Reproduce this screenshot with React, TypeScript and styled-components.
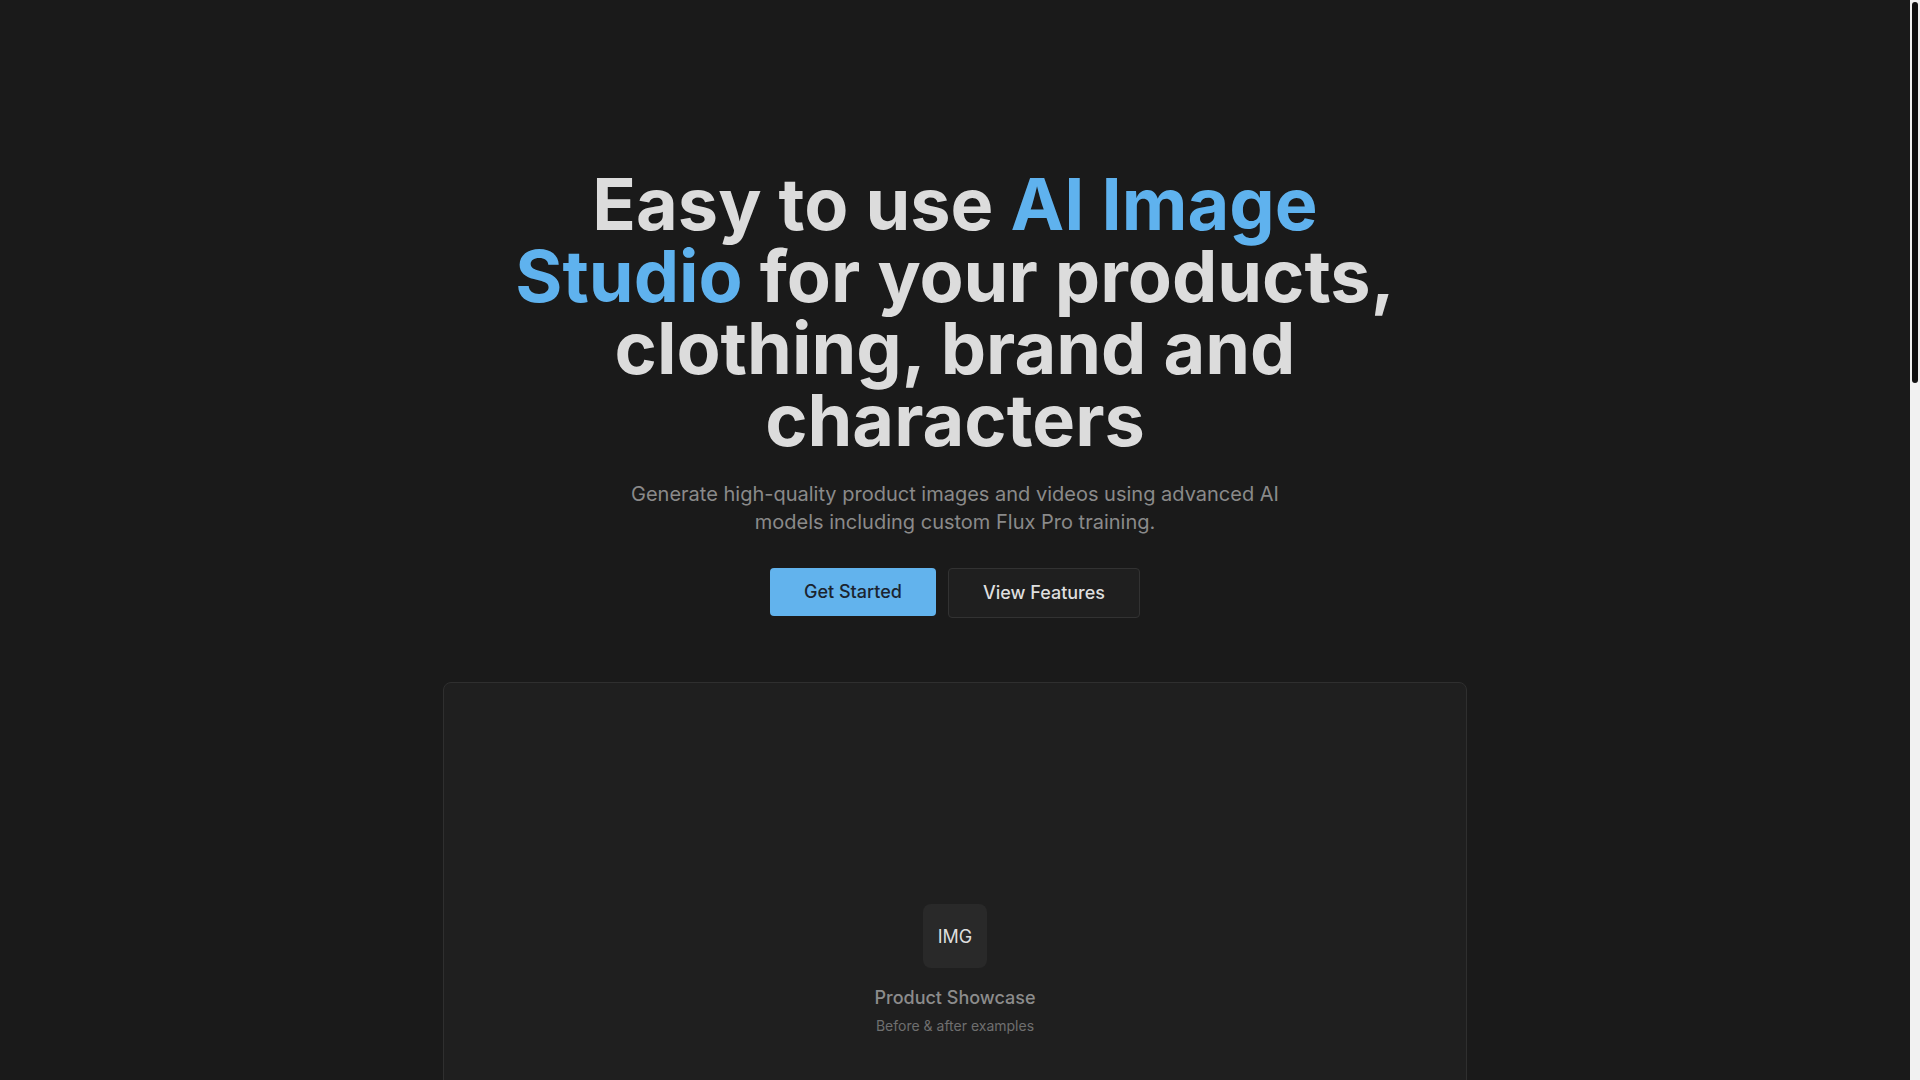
import * as React from 'react';
import styled, { createGlobalStyle } from 'styled-components';

const GlobalStyle = createGlobalStyle`
	html, body {
		height: 100%;
		overflow: hidden;
	}

	body {
		margin: 0;
		background: #1a1a1a;
		color: #dcdcdc;
		font-family: Inter, 'Noto Sans', sans-serif;
		-webkit-font-smoothing: antialiased;
	}

	#root {
		height: 100%;
	}

	* {
		box-sizing: border-box;
	}
`;

const Shell = styled.div`
	height: 100vh;
	display: flex;
	background: #1a1a1a;
`;

const Page = styled.main`
	flex: 1;
	height: 100vh;
	overflow-y: scroll;
	scrollbar-width: none;

	&::-webkit-scrollbar {
		display: none;
	}
`;

const ScrollRail = styled.div`
	position: relative;
	flex: 0 0 10px;
	height: 100vh;
	background: #f1f1f1;
`;

const ScrollThumb = styled.div`
	position: absolute;
	left: 2px;
	right: 2px;
	border-radius: 3px;
	background: #111111;
`;

const Hero = styled.section`
	padding: 168px 24px 96px;
	display: flex;
	flex-direction: column;
	align-items: center;
	text-align: center;
`;

const Title = styled.h1`
	max-width: 896px;
	margin: 0 0 24px;
	font-size: 72px;
	line-height: 72px;
	font-weight: 700;
	color: #dcdcdc;
`;

const Accent = styled.span`
	color: #5fb2ee;
`;

const Lead = styled.p`
	max-width: 672px;
	margin: 0 0 32px;
	font-size: 20px;
	line-height: 28px;
	color: #8a8a8a;
`;

const Actions = styled.div`
	display: flex;
	align-items: flex-start;
	justify-content: center;
	gap: 12px;
	margin-bottom: 64px;
`;

const Button = styled.a<{ $primary?: boolean }>`
	display: inline-flex;
	align-items: center;
	justify-content: center;
	padding: 10px 34px;
	font-size: 18px;
	line-height: 28px;
	font-weight: 500;
	text-decoration: none;
	border-radius: 4px;
	cursor: pointer;
	background: ${p => (p.$primary ? '#62b3ed' : '#1f1f1f')};
	color: ${p => (p.$primary ? '#1b2430' : '#dedede')};
	border: ${p => (p.$primary ? 'none' : '1px solid #323232')};
`;

const Showcase = styled.div`
	width: 100%;
	max-width: 1024px;
	aspect-ratio: 16 / 9;
	background: #1f1f1f;
	border: 1px solid #2f2f2f;
	border-radius: 8px;
	display: flex;
	flex-direction: column;
	align-items: center;
	justify-content: center;
`;

const Placeholder = styled.div`
	width: 64px;
	height: 64px;
	border-radius: 8px;
	background: #292929;
	display: flex;
	align-items: center;
	justify-content: center;
	font-size: 18px;
	color: #dedede;
	margin-bottom: 16px;
`;

const ShowcaseTitle = styled.div`
	font-size: 18px;
	line-height: 28px;
	font-weight: 500;
	color: #8c8c8c;
`;

const ShowcaseNote = styled.div`
	margin-top: 4px;
	font-size: 14px;
	line-height: 20px;
	color: #6f6f6f;
`;

const Section = styled.section`
	padding: 120px 24px;
	display: flex;
	flex-direction: column;
	align-items: center;
	text-align: center;
`;

const SectionTitle = styled.h2`
	margin: 0 0 16px;
	font-size: 48px;
	line-height: 56px;
	font-weight: 700;
	color: #dcdcdc;
`;

const SectionLead = styled.p`
	max-width: 672px;
	margin: 0 0 64px;
	font-size: 18px;
	line-height: 28px;
	color: #8a8a8a;
`;

const Grid = styled.div`
	width: 100%;
	max-width: 1024px;
	display: grid;
	grid-template-columns: repeat(3, 1fr);
	gap: 24px;
	text-align: left;
`;

const FeatureCard = styled.div`
	background: #1f1f1f;
	border: 1px solid #2f2f2f;
	border-radius: 8px;
	padding: 32px;
	min-height: 240px;
`;

const FeatureIcon = styled.div`
	width: 48px;
	height: 48px;
	border-radius: 8px;
	background: #292929;
	color: #5fb2ee;
	display: flex;
	align-items: center;
	justify-content: center;
	font-size: 14px;
	font-weight: 600;
	margin-bottom: 20px;
`;

const FeatureTitle = styled.h3`
	margin: 0 0 8px;
	font-size: 20px;
	line-height: 28px;
	font-weight: 600;
	color: #dcdcdc;
`;

const FeatureText = styled.p`
	margin: 0;
	font-size: 15px;
	line-height: 24px;
	color: #8a8a8a;
`;

const Footer = styled.footer`
	border-top: 1px solid #2a2a2a;
	padding: 64px 24px;
	text-align: center;
	font-size: 14px;
	color: #6f6f6f;
`;

const features = [
	{ tag: 'PRD', title: 'Product Photography', text: 'Place your products in studio-quality scenes without a photo shoot.' },
	{ tag: 'CLO', title: 'Clothing & Fashion', text: 'Show garments on models and in lifestyle settings in seconds.' },
	{ tag: 'BRD', title: 'Brand Consistency', text: 'Keep colours, style and tone consistent across every asset.' },
	{ tag: 'CHR', title: 'Characters', text: 'Create recurring characters that stay the same in every image.' },
	{ tag: 'VID', title: 'Video Generation', text: 'Turn still images into short product videos for ads and social.' },
	{ tag: 'FLX', title: 'Flux Pro Training', text: 'Train custom Flux Pro models on your own products and style.' },
];

const steps = [
	{ tag: '01', title: 'Upload', text: 'Add photos of your product, garment or character.' },
	{ tag: '02', title: 'Train', text: 'Fine-tune a custom Flux Pro model in a few minutes.' },
	{ tag: '03', title: 'Generate', text: 'Create images and videos for any campaign or channel.' },
];

export default function App() {
	const pageRef = React.useRef<HTMLElement>(null);
	const [thumb, setThumb] = React.useState({ top: 2, height: 0 });

	React.useEffect(() => {
		const el = pageRef.current;
		if (!el) return;
		const update = () => {
			const track = el.clientHeight - 4;
			const ratio = el.clientHeight / el.scrollHeight;
			const height = Math.max(24, track * ratio);
			const max = el.scrollHeight - el.clientHeight;
			const top = 2 + (max > 0 ? (el.scrollTop / max) * (track - height) : 0);
			setThumb({ top, height: ratio >= 1 ? 0 : height });
		};
		update();
		el.addEventListener('scroll', update);
		window.addEventListener('resize', update);
		document.fonts?.ready.then(update);
		return () => {
			el.removeEventListener('scroll', update);
			window.removeEventListener('resize', update);
		};
	}, []);

	return (
		<Shell>
			<GlobalStyle />
			<Page ref={pageRef}>
				<Hero>
					<Title>
						Easy to use <Accent>AI Image Studio</Accent> for your products, clothing, brand and characters
					</Title>
					<Lead>
						Generate high-quality product images and videos using advanced AI models including custom Flux Pro training.
					</Lead>
					<Actions>
						<Button $primary href="#start">Get Started</Button>
						<Button href="#features">View Features</Button>
					</Actions>
					<Showcase>
						<Placeholder>IMG</Placeholder>
						<ShowcaseTitle>Product Showcase</ShowcaseTitle>
						<ShowcaseNote>Before &amp; after examples</ShowcaseNote>
					</Showcase>
				</Hero>
				<Section id="features">
					<SectionTitle>Everything you need</SectionTitle>
					<SectionLead>One studio for product shots, fashion, brand assets and consistent characters.</SectionLead>
					<Grid>
						{features.map(f => (
							<FeatureCard key={f.title}>
								<FeatureIcon>{f.tag}</FeatureIcon>
								<FeatureTitle>{f.title}</FeatureTitle>
								<FeatureText>{f.text}</FeatureText>
							</FeatureCard>
						))}
					</Grid>
				</Section>
				<Section id="start">
					<SectionTitle>How it works</SectionTitle>
					<SectionLead>From upload to finished assets in three steps.</SectionLead>
					<Grid>
						{steps.map(s => (
							<FeatureCard key={s.tag}>
								<FeatureIcon>{s.tag}</FeatureIcon>
								<FeatureTitle>{s.title}</FeatureTitle>
								<FeatureText>{s.text}</FeatureText>
							</FeatureCard>
						))}
					</Grid>
				</Section>
				<Footer>© AI Image Studio</Footer>
			</Page>
			<ScrollRail>
				<ScrollThumb style={{ top: thumb.top, height: thumb.height }} />
			</ScrollRail>
		</Shell>
	);
}
